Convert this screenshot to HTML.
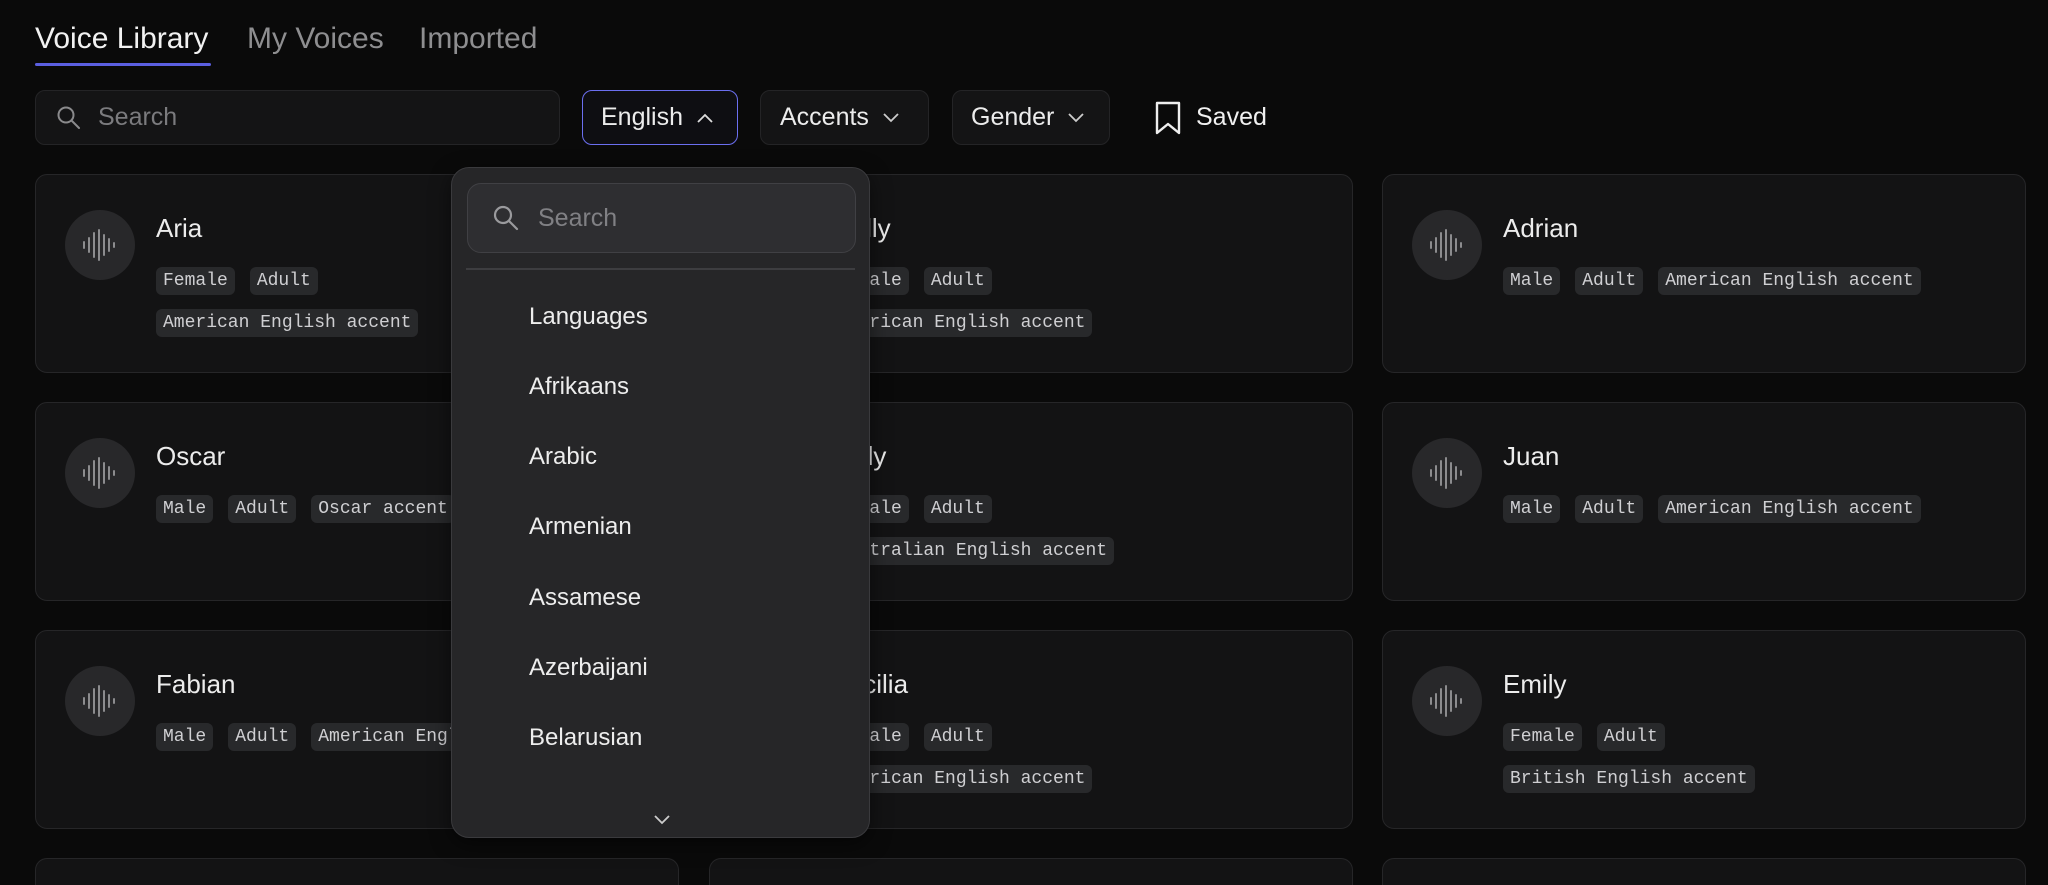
<!DOCTYPE html>
<html><head><meta charset="utf-8"><style>
*{box-sizing:border-box;margin:0;padding:0}
html,body{width:2048px;height:885px;overflow:hidden}
body{background:#0a0a0a;font-family:"Liberation Sans",sans-serif;color:#ececec;position:relative}
.tab{position:absolute;top:22px;font-size:30px;color:#8e8e90}
.tab.a{color:#f2f2f2}
.ul{position:absolute;left:35px;top:63px;width:176px;height:3px;background:#5b5fe0;border-radius:2px}
.box{position:absolute;top:90px;height:55px;border:1.5px solid #242426;background:#141415;border-radius:10px;font-size:25px;display:flex;align-items:center}
.card{position:absolute;width:644px;height:199px;background:#131314;border:1.5px solid #262628;border-radius:12px}
.av{position:absolute;left:29px;top:35px;width:70px;height:70px;border-radius:50%;background:#28282a}
.av svg{position:absolute;left:17px;top:17px}
.nm{position:absolute;left:120px;top:38px;font-size:26px;color:#ececec}
.tags{position:absolute;left:120px;top:92px}
.row{display:flex;gap:15px;margin-bottom:14px}
.tg{height:28px;line-height:28px;padding:0 7px;background:#28292b;border-radius:6px;font-family:"Liberation Mono",monospace;font-size:18px;color:#cfcfd2}
.dd{position:absolute;left:451px;top:167px;width:419px;height:671px;background:#262628;border:1.5px solid #3a3a3d;border-radius:18px;box-shadow:0 6px 20px rgba(0,0,0,.5)}
.dd .s{position:absolute;left:15px;top:15px;width:389px;height:70px;background:#2e2e31;border:1.5px solid #404044;border-radius:14px}
.dd .sep{position:absolute;left:14px;right:14px;top:100px;height:1.5px;background:#3d3d40}
.it{position:absolute;left:77px;font-size:24px;color:#ededed}
</style></head><body>
<div class="tab a" style="left:35px">Voice Library</div>
<div class="tab" style="left:247px">My Voices</div>
<div class="tab" style="left:419px">Imported</div>
<div class="ul"></div>

<div class="box" style="left:35px;width:525px">
<svg style="margin-left:20px" width="26" height="26" viewBox="0 0 26 26"><circle cx="10" cy="10" r="7.5" fill="none" stroke="#8a8a8c" stroke-width="2"/><path d="M15.5 15.5L23 23" stroke="#8a8a8c" stroke-width="2" stroke-linecap="round"/></svg>
<span style="margin-left:16px;color:#7b7b7e">Search</span></div>
<div class="box" style="left:582px;width:156px;border-color:#6b6ff0;background:#0e0e12"><span style="margin-left:18px">English</span><svg style="margin-left:14px" width="16" height="10" viewBox="0 0 16 10"><path d="M1 9L8 2L15 9" fill="none" stroke="#ddd" stroke-width="1.8"/></svg></div>
<div class="box" style="left:760px;width:169px"><span style="margin-left:19px">Accents</span><svg style="margin-left:14px" width="16" height="10" viewBox="0 0 16 10"><path d="M1 1L8 8L15 1" fill="none" stroke="#ccc" stroke-width="1.8"/></svg></div>
<div class="box" style="left:952px;width:158px"><span style="margin-left:18px">Gender</span><svg style="margin-left:14px" width="16" height="10" viewBox="0 0 16 10"><path d="M1 1L8 8L15 1" fill="none" stroke="#ccc" stroke-width="1.8"/></svg></div>
<svg style="position:absolute;left:1154px;top:101px" width="28" height="34" viewBox="0 0 28 34"><path d="M3 2H25V32L14 23L3 32Z" fill="none" stroke="#eee" stroke-width="2.4" stroke-linejoin="round"/></svg>
<div style="position:absolute;left:1196px;top:103px;font-size:25px;color:#f0f0f0">Saved</div>

<div class="card" style="left:35px;top:174px"><div class="av"><svg width="36" height="36" viewBox="0 0 36 36"><g stroke="#8c8c8e" stroke-width="2" stroke-linecap="round"><path d="M2 15v6M7 11v14M12 6v24M17 3v30M22 8v20M27 12v12M32 16v4"/></g></svg></div><div class="nm">Aria</div><div class="tags"><div class="row"><span class="tg">Female</span><span class="tg">Adult</span></div><div class="row"><span class="tg">American English accent</span></div></div></div>
<div class="card" style="left:709px;top:174px"><div class="av"><svg width="36" height="36" viewBox="0 0 36 36"><g stroke="#8c8c8e" stroke-width="2" stroke-linecap="round"><path d="M2 15v6M7 11v14M12 6v24M17 3v30M22 8v20M27 12v12M32 16v4"/></g></svg></div><div class="nm">Molly</div><div class="tags"><div class="row"><span class="tg">Female</span><span class="tg">Adult</span></div><div class="row"><span class="tg">American English accent</span></div></div></div>
<div class="card" style="left:1382px;top:174px"><div class="av"><svg width="36" height="36" viewBox="0 0 36 36"><g stroke="#8c8c8e" stroke-width="2" stroke-linecap="round"><path d="M2 15v6M7 11v14M12 6v24M17 3v30M22 8v20M27 12v12M32 16v4"/></g></svg></div><div class="nm">Adrian</div><div class="tags"><div class="row"><span class="tg">Male</span><span class="tg">Adult</span><span class="tg">American English accent</span></div></div></div>

<div class="card" style="left:35px;top:402px"><div class="av"><svg width="36" height="36" viewBox="0 0 36 36"><g stroke="#8c8c8e" stroke-width="2" stroke-linecap="round"><path d="M2 15v6M7 11v14M12 6v24M17 3v30M22 8v20M27 12v12M32 16v4"/></g></svg></div><div class="nm">Oscar</div><div class="tags"><div class="row"><span class="tg">Male</span><span class="tg">Adult</span><span class="tg">Oscar accent</span></div></div></div>
<div class="card" style="left:709px;top:402px"><div class="av"><svg width="36" height="36" viewBox="0 0 36 36"><g stroke="#8c8c8e" stroke-width="2" stroke-linecap="round"><path d="M2 15v6M7 11v14M12 6v24M17 3v30M22 8v20M27 12v12M32 16v4"/></g></svg></div><div class="nm">Sally</div><div class="tags"><div class="row"><span class="tg">Female</span><span class="tg">Adult</span></div><div class="row"><span class="tg">Australian English accent</span></div></div></div>
<div class="card" style="left:1382px;top:402px"><div class="av"><svg width="36" height="36" viewBox="0 0 36 36"><g stroke="#8c8c8e" stroke-width="2" stroke-linecap="round"><path d="M2 15v6M7 11v14M12 6v24M17 3v30M22 8v20M27 12v12M32 16v4"/></g></svg></div><div class="nm">Juan</div><div class="tags"><div class="row"><span class="tg">Male</span><span class="tg">Adult</span><span class="tg">American English accent</span></div></div></div>

<div class="card" style="left:35px;top:630px"><div class="av"><svg width="36" height="36" viewBox="0 0 36 36"><g stroke="#8c8c8e" stroke-width="2" stroke-linecap="round"><path d="M2 15v6M7 11v14M12 6v24M17 3v30M22 8v20M27 12v12M32 16v4"/></g></svg></div><div class="nm">Fabian</div><div class="tags"><div class="row"><span class="tg">Male</span><span class="tg">Adult</span><span class="tg">American English accent</span></div></div></div>
<div class="card" style="left:709px;top:630px"><div class="av"><svg width="36" height="36" viewBox="0 0 36 36"><g stroke="#8c8c8e" stroke-width="2" stroke-linecap="round"><path d="M2 15v6M7 11v14M12 6v24M17 3v30M22 8v20M27 12v12M32 16v4"/></g></svg></div><div class="nm">Cecilia</div><div class="tags"><div class="row"><span class="tg">Female</span><span class="tg">Adult</span></div><div class="row"><span class="tg">American English accent</span></div></div></div>
<div class="card" style="left:1382px;top:630px"><div class="av"><svg width="36" height="36" viewBox="0 0 36 36"><g stroke="#8c8c8e" stroke-width="2" stroke-linecap="round"><path d="M2 15v6M7 11v14M12 6v24M17 3v30M22 8v20M27 12v12M32 16v4"/></g></svg></div><div class="nm">Emily</div><div class="tags"><div class="row"><span class="tg">Female</span><span class="tg">Adult</span></div><div class="row"><span class="tg">British English accent</span></div></div></div>

<div class="card" style="left:35px;top:858px;height:27px;border-bottom:none;border-radius:12px 12px 0 0"></div>
<div class="card" style="left:709px;top:858px;height:27px;border-bottom:none;border-radius:12px 12px 0 0"></div>
<div class="card" style="left:1382px;top:858px;height:27px;border-bottom:none;border-radius:12px 12px 0 0"></div>

<div class="dd">
<div class="s"><svg style="position:absolute;left:24px;top:20px" width="28" height="28" viewBox="0 0 28 28"><circle cx="11" cy="11" r="8" fill="none" stroke="#9a9a9d" stroke-width="2.2"/><path d="M17 17L25 25" stroke="#9a9a9d" stroke-width="2.2" stroke-linecap="round"/></svg><span style="position:absolute;left:70px;top:20px;font-size:25px;color:#808084">Search</span></div>
<div class="sep"></div>
<div class="it" style="top:135px">Languages</div>
<div class="it" style="top:205px">Afrikaans</div>
<div class="it" style="top:275px">Arabic</div>
<div class="it" style="top:345px">Armenian</div>
<div class="it" style="top:416px">Assamese</div>
<div class="it" style="top:486px">Azerbaijani</div>
<div class="it" style="top:556px">Belarusian</div>
<svg style="position:absolute;left:202px;top:647px" width="16" height="10" viewBox="0 0 16 10"><path d="M1 1L8 8L15 1" fill="none" stroke="#ccc" stroke-width="1.8"/></svg>
</div>
</body></html>
